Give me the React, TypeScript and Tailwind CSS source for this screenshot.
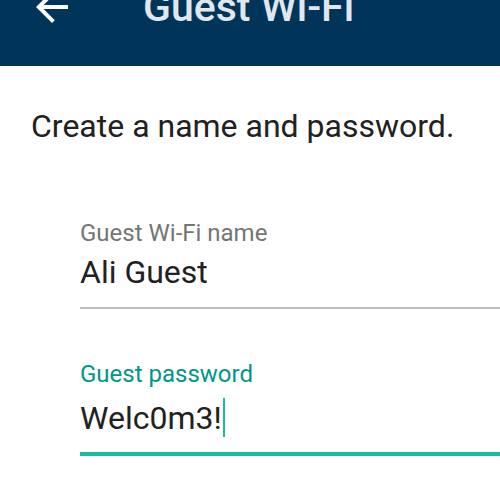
import React from 'react'

function ArrowBack() {
  return (
    <svg viewBox="0 0 24 24" className="h-12 w-12 fill-white">
      <path d="M20 11H7.83l5.59-5.59L12 4l-8 8 8 8 1.41-1.41L7.83 13H20v-2z" />
    </svg>
  )
}

export default function App() {
  return (
    <div className="h-[500px] w-[500px] overflow-hidden bg-white font-['Roboto',sans-serif]">
      {/* App bar, scrolled partly out of view */}
      <div className="relative flex h-[66px] items-start bg-[#003459]">
        <div className="absolute left-[28px] top-[-17px]">
          <ArrowBack />
        </div>
        <h1 className="ml-[143px] -mt-[13px] text-[41px] font-medium leading-[41px] text-[#e1e7ef]">Guest Wi-Fi</h1>
      </div>

      <p className="ml-[31px] mt-[41px] text-[32px] leading-[38px] text-[#212121]">Create a name and password.</p>

      <div className="ml-[80px] mt-[74px]">
        <label className="block text-[24px] leading-[28px] text-[#757575]">Guest Wi-Fi name</label>
        <div className="mt-[6px] text-[32px] leading-[38px] text-[#212121]">Ali Guest</div>
        <div className="mt-[16px] h-[2px] bg-[#bdbdbd]" />
      </div>

      <div className="ml-[80px] mt-[51px]">
        <label className="block text-[24px] leading-[28px] text-[#009688]">Guest password</label>
        <div className="mt-[10px] flex items-center text-[32px] leading-[38px] text-[#212121]">
          <span>Welc0m3!</span>
          <span className="ml-[1px] h-[39px] w-[2px] bg-[#1abc9c]" />
        </div>
        <div className="mt-[15px] h-[4px] bg-[#1abc9c]" />
      </div>
    </div>
  )
}
